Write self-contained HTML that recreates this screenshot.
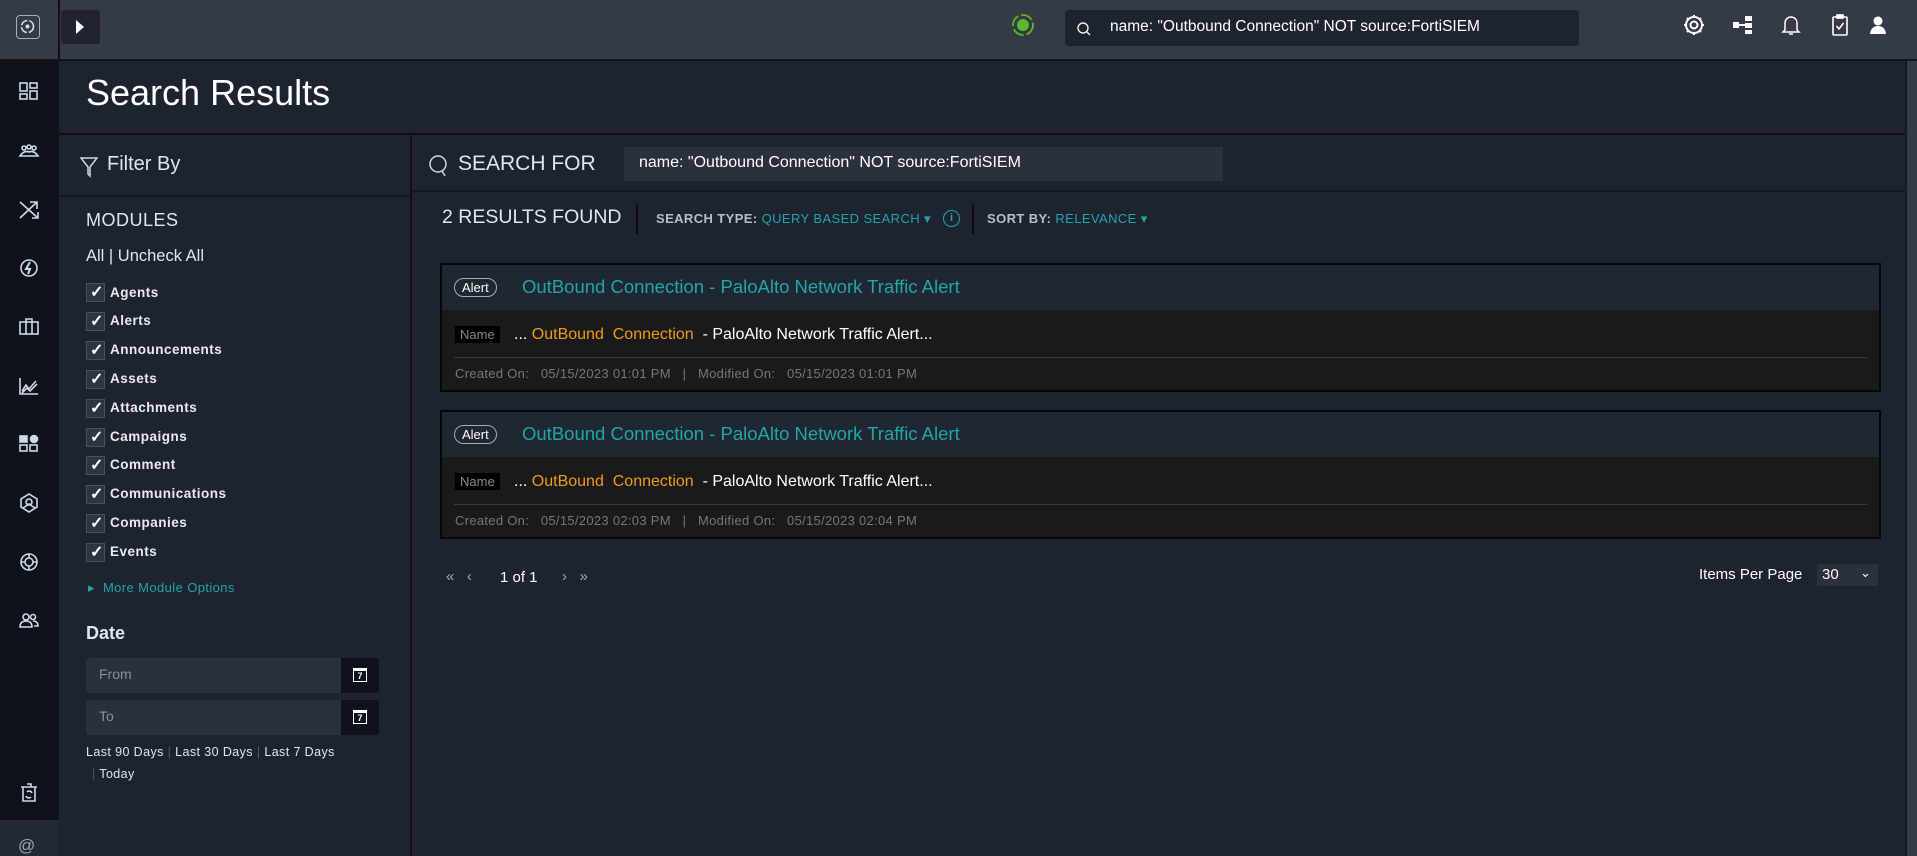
<!DOCTYPE html>
<html><head><meta charset="utf-8"><style>
*{box-sizing:border-box;margin:0;padding:0}
body{width:1917px;height:856px;overflow:hidden;background:#1e2330;font-family:"Liberation Sans",sans-serif;color:#e6e9ee;position:relative}
.abs{position:absolute}
svg{display:block}
.ic{position:absolute;left:17px;width:24px;height:24px}
.ic svg{stroke:#cfd8ea;fill:none;stroke-width:1.6}
.cb{position:absolute;left:86px;width:19px;height:19px;background:#2e3440;border:1px solid #4a505c}
.cb:after{content:"✓";position:absolute;left:3px;top:-2px;font-size:16px;font-weight:bold;color:#fff}
.cbl{position:absolute;left:110px;font-size:13.5px;font-weight:bold;letter-spacing:.5px;color:#e8ecf2}
.card{position:absolute;left:440px;width:1441px;height:129px;border:2px solid #050608;background:#1a1a1a}
.card .hd{height:45px;background:#1f2733;position:relative}
.pill{position:absolute;left:12px;top:13px;border:1px solid #aab;border-radius:11px;font-size:13px;padding:1px 7px;color:#fff}
.ttl{position:absolute;left:80px;top:11px;font-size:18.5px;color:#22a5aa}
.nm{position:absolute;left:13px;top:60px;background:#000;color:#888;font-size:13px;padding:1px 5px}
.line{position:absolute;left:12px;top:90px;font-size:16px;color:#fff}
.or{color:#f09b1c}
.sep{position:absolute;left:12px;right:12px;top:92px;height:1px;background:#3a3a3a}
.dt{position:absolute;left:13px;top:101px;font-size:13px;color:#777;letter-spacing:.3px}
</style></head><body>
<div class="abs" style="left:0;top:0;width:1917px;height:59px;background:#343a47"></div>
<div class="abs" style="left:58px;top:0;width:2px;height:59px;background:#0e1118"></div>
<div class="abs" style="left:0;top:59px;width:1917px;height:2px;background:#10141b"></div>
<div class="abs" style="left:16px;top:15px;width:24px;height:24px;border:1.5px solid #a8afbb;border-radius:4px">
<svg width="21" height="21" viewBox="0 0 21 21"><circle cx="10.5" cy="10.5" r="6" stroke="#d8dde6" stroke-width="1.6" fill="none" stroke-dasharray="8 2"/><circle cx="10.5" cy="10.5" r="2" fill="#d8dde6"/></svg></div>
<div class="abs" style="left:61px;top:10px;width:39px;height:34px;background:#1f2430;border-radius:3px"><svg width="39" height="34"><path d="M15 10 L23 17 L15 24Z" fill="#fff"/></svg></div>
<svg class="abs" style="left:1011px;top:13px" width="24" height="24"><circle cx="12" cy="12" r="10" stroke="#5ab82c" stroke-width="1.8" fill="none" stroke-dasharray="12 3"/><circle cx="12" cy="12" r="6" fill="#5ab82c"/></svg>
<div class="abs" style="left:1065px;top:10px;width:514px;height:36px;background:#1e2330;border-radius:3px">
<svg class="abs" style="left:11px;top:11px" width="16" height="16"><circle cx="7" cy="7" r="5" stroke="#eee" stroke-width="1.4" fill="none"/><path d="M10.5 10.5L14 14" stroke="#eee" stroke-width="1.4"/></svg>
<div class="abs" style="left:45px;top:8px;font-size:15.5px;color:#fff">name: "Outbound Connection" NOT source:FortiSIEM</div></div>
<svg class="abs" style="left:1682px;top:13px" width="24" height="24" fill="none" stroke="#fff" stroke-width="2"><circle cx="12" cy="12" r="3.5"/><circle cx="12" cy="12" r="8"/><path d="M12 2V5 M12 19V22 M2 12H5 M19 12H22 M5 5L7 7 M17 17L19 19 M5 19L7 17 M17 7L19 5"/></svg>
<svg class="abs" style="left:1732px;top:15px" width="22" height="20" fill="#fff"><rect x="1" y="7" width="6" height="6"/><rect x="13" y="1" width="7" height="5"/><rect x="13" y="8" width="7" height="5"/><rect x="13" y="15" width="7" height="4"/><rect x="7" y="9" width="6" height="2"/></svg>
<svg class="abs" style="left:1781px;top:13px" width="20" height="24" fill="none" stroke="#fff" stroke-width="1.5"><path d="M4 17 V10 A6 6 0 0 1 16 10 V17 L18 19 H2Z"/><path d="M8 21 H12"/></svg>
<svg class="abs" style="left:1831px;top:13px" width="18" height="24" fill="none" stroke="#fff" stroke-width="1.6"><rect x="2" y="4" width="14" height="18" rx="1"/><rect x="6" y="2" width="6" height="3" fill="#fff"/><path d="M5.5 13 L8 16 L12.5 10"/></svg>
<svg class="abs" style="left:1868px;top:15px" width="20" height="20" fill="#fff"><circle cx="10" cy="6" r="4.5"/><path d="M2 19 Q3 11 10 11 Q17 11 18 19Z"/></svg>

<div class="abs" style="left:0;top:61px;width:59px;height:795px;background:#0e121a"></div>
<div class="abs" style="left:0;top:820px;width:59px;height:36px;background:#232934"></div>
<div class="abs" style="left:18px;top:836px;font-size:17px;color:#9aa">@</div>
<div class="ic" style="top:80px"><svg width="24" height="24"><rect x="3" y="3" width="7" height="8"/><rect x="13" y="3" width="7" height="5"/><rect x="3" y="14" width="7" height="5"/><rect x="13" y="11" width="7" height="8"/></svg></div>
<div class="ic" style="top:139px"><svg width="24" height="24"><circle cx="7" cy="9" r="2"/><circle cx="12" cy="8" r="2"/><circle cx="17" cy="9" r="2"/><path d="M3 17 Q7 11 12 13 Q17 11 21 17 Z"/></svg></div>
<div class="ic" style="top:198px"><svg width="24" height="24"><path d="M3 4 L21 20 M13 4 H20 V11 M20 4 L3 20 M21 14 V20 H15"/></svg></div>
<div class="ic" style="top:256px"><svg width="24" height="24"><circle cx="12" cy="12" r="8"/><path d="M13 6 L9 13 H13 L11 18" stroke-width="2"/></svg></div>
<div class="ic" style="top:315px"><svg width="24" height="24"><rect x="3" y="7" width="18" height="12"/><path d="M9 7 V4 H15 V7 M9 7V19 M15 7V19"/></svg></div>
<div class="ic" style="top:374px"><svg width="24" height="24"><path d="M3 4 V20 H21 M5 17 L9 11 L12 15 L19 7 M5 19 L10 14 L13 17 L20 10"/></svg></div>
<div class="ic" style="top:432px"><svg width="24" height="24"><rect x="3" y="4" width="7" height="6" fill="#cfd8ea"/><circle cx="17" cy="7" r="3.5" fill="#cfd8ea"/><rect x="3" y="13" width="7" height="6"/><rect x="13" y="13" width="7" height="6"/></svg></div>
<div class="ic" style="top:491px"><svg width="24" height="24"><path d="M12 3 L20 8 V16 L12 21 L4 16 V8Z"/><circle cx="12" cy="11" r="3"/><path d="M6 17 L12 13 L18 17"/></svg></div>
<div class="ic" style="top:550px"><svg width="24" height="24"><circle cx="12" cy="12" r="8"/><circle cx="12" cy="12" r="4"/><path d="M12 4V8 M12 16V20 M4 12H8 M16 12H20"/></svg></div>
<div class="ic" style="top:608px"><svg width="24" height="24"><circle cx="9" cy="9" r="3"/><circle cx="16" cy="9" r="2.5"/><path d="M3 19 Q3 13 9 13 Q15 13 15 19Z M16 13 Q21 13 21 18 H17"/></svg></div>
<div class="ic" style="top:780px"><svg width="24" height="24"><path d="M6 7 H18 V21 H6Z M4 7 H20 M10 4 H14 V7"/><path d="M10 12 A3 3 0 0 1 15 13 M14 17 A3 3 0 0 1 9 16"/></svg></div>

<div class="abs" style="left:86px;top:72px;font-size:36px;color:#fff">Search Results</div>
<div class="abs" style="left:59px;top:133px;width:1858px;height:2px;background:#0e1118"></div>
<div class="abs" style="left:1907px;top:61px;width:10px;height:795px;background:#343a47"></div>
<div class="abs" style="left:1905px;top:61px;width:2px;height:795px;background:#151922"></div>

<div class="abs" style="left:410px;top:135px;width:2px;height:721px;background:#0e1118"></div>
<div class="abs" style="left:59px;top:195px;width:351px;height:2px;background:#141821"></div>
<svg class="abs" style="left:80px;top:156px" width="18" height="22" fill="none" stroke="#cfd8ea" stroke-width="1.5"><path d="M1 2 H17 L10 11 V20 L8 18 V11Z"/></svg>
<div class="abs" style="left:107px;top:153px;font-size:20px;color:#dfe6f0">Filter By</div>
<div class="abs" style="left:86px;top:210px;font-size:18px;color:#dfe6f0;letter-spacing:.5px">MODULES</div>
<div class="abs" style="left:86px;top:247px;font-size:16.5px;color:#dfe6f0">All | Uncheck All</div>
<div class="cb" style="top:283px"></div><div class="cbl" style="top:285px">Agents</div>
<div class="cb" style="top:312px"></div><div class="cbl" style="top:313px">Alerts</div>
<div class="cb" style="top:341px"></div><div class="cbl" style="top:342px">Announcements</div>
<div class="cb" style="top:370px"></div><div class="cbl" style="top:371px">Assets</div>
<div class="cb" style="top:399px"></div><div class="cbl" style="top:400px">Attachments</div>
<div class="cb" style="top:428px"></div><div class="cbl" style="top:429px">Campaigns</div>
<div class="cb" style="top:456px"></div><div class="cbl" style="top:457px">Comment</div>
<div class="cb" style="top:485px"></div><div class="cbl" style="top:486px">Communications</div>
<div class="cb" style="top:514px"></div><div class="cbl" style="top:515px">Companies</div>
<div class="cb" style="top:543px"></div><div class="cbl" style="top:544px">Events</div>
<div class="abs" style="left:88px;top:580px;font-size:13px;color:#22a5aa;letter-spacing:.4px">▸&nbsp; More Module Options</div>
<div class="abs" style="left:86px;top:623px;font-size:18px;font-weight:bold;color:#dfe6f0">Date</div>
<div class="abs" style="left:86px;top:658px;width:293px;height:35px;background:#2a303c;border-radius:3px"><span class="abs" style="left:13px;top:8px;font-size:14px;color:#8a909a">From</span><div class="abs" style="left:255px;top:0;width:38px;height:35px;background:#0e121a;border-radius:0 3px 3px 0"></div></div>
<div class="abs" style="left:86px;top:700px;width:293px;height:35px;background:#2a303c;border-radius:3px"><span class="abs" style="left:13px;top:8px;font-size:14px;color:#8a909a">To</span><div class="abs" style="left:255px;top:0;width:38px;height:35px;background:#0e121a;border-radius:0 3px 3px 0"></div></div>
<div class="abs" style="left:353px;top:668px;width:14px;height:14px;border:1.5px solid #fff;border-top-width:3px;font-size:9px;font-weight:bold;text-align:center;line-height:10px;color:#fff">7</div>
<div class="abs" style="left:353px;top:710px;width:14px;height:14px;border:1.5px solid #fff;border-top-width:3px;font-size:9px;font-weight:bold;text-align:center;line-height:10px;color:#fff">7</div>
<div class="abs" style="left:86px;top:745px;font-size:12.5px;color:#dfe6f0;letter-spacing:.4px">Last 90 Days <span style="color:#555">|</span> Last 30 Days <span style="color:#555">|</span> Last 7 Days</div>
<div class="abs" style="left:92px;top:767px;font-size:12.5px;color:#dfe6f0;letter-spacing:.4px"><span style="color:#555">|</span> Today</div>

<div class="abs" style="left:412px;top:190px;width:1493px;height:2px;background:#141821"></div>
<svg class="abs" style="left:428px;top:154px" width="22" height="24" fill="none" stroke="#cfd8ea" stroke-width="1.5"><circle cx="10" cy="10" r="8"/><path d="M14 17 L17 22"/></svg>
<div class="abs" style="left:458px;top:152px;font-size:21px;color:#dfe6f0">SEARCH FOR</div>
<div class="abs" style="left:624px;top:147px;width:599px;height:34px;background:#2a303c;border-radius:2px"><span class="abs" style="left:15px;top:7px;font-size:16px;color:#fff">name: "Outbound Connection" NOT source:FortiSIEM</span></div>
<div class="abs" style="left:442px;top:206px;font-size:19.5px;color:#dfe6f0">2 RESULTS FOUND</div>
<div class="abs" style="left:636px;top:204px;width:2px;height:30px;background:#0a0c10"></div>
<div class="abs" style="left:656px;top:211px;font-size:13px;color:#b8bfca;font-weight:bold;letter-spacing:.4px">SEARCH TYPE: <span style="color:#22a5aa;font-weight:normal">QUERY BASED SEARCH ▾</span></div>
<div class="abs" style="left:943px;top:210px;width:17px;height:17px;border:1.5px solid #22a5aa;border-radius:50%;font-size:11px;color:#22a5aa;text-align:center;line-height:14px;font-weight:bold">i</div>
<div class="abs" style="left:972px;top:204px;width:2px;height:30px;background:#0a0c10"></div>
<div class="abs" style="left:987px;top:211px;font-size:13px;color:#b8bfca;font-weight:bold;letter-spacing:.4px">SORT BY: <span style="color:#22a5aa;font-weight:normal">RELEVANCE ▾</span></div>

<div class="card" style="top:263px"><div class="hd"><span class="pill">Alert</span><span class="ttl">OutBound Connection - PaloAlto Network Traffic Alert</span></div>
<span class="nm" style="top:61px">Name</span><div class="line" style="top:61px;left:72px">... <span class="or">OutBound</span>&nbsp; <span class="or">Connection</span>&nbsp; - PaloAlto Network Traffic Alert...</div>
<div class="sep"></div><div class="dt">Created On: &nbsp;&nbsp;05/15/2023 01:01 PM &nbsp;&nbsp;| &nbsp;&nbsp;Modified On: &nbsp;&nbsp;05/15/2023 01:01 PM</div></div>

<div class="card" style="top:410px"><div class="hd"><span class="pill">Alert</span><span class="ttl">OutBound Connection - PaloAlto Network Traffic Alert</span></div>
<span class="nm" style="top:61px">Name</span><div class="line" style="top:61px;left:72px">... <span class="or">OutBound</span>&nbsp; <span class="or">Connection</span>&nbsp; - PaloAlto Network Traffic Alert...</div>
<div class="sep"></div><div class="dt">Created On: &nbsp;&nbsp;05/15/2023 02:03 PM &nbsp;&nbsp;| &nbsp;&nbsp;Modified On: &nbsp;&nbsp;05/15/2023 02:04 PM</div></div>

<div class="abs" style="left:446px;top:568px;font-size:15px;color:#aab">«&nbsp;&nbsp; ‹</div>
<div class="abs" style="left:500px;top:569px;font-size:15px;color:#fff">1 of 1</div>
<div class="abs" style="left:562px;top:568px;font-size:15px;color:#aab">›&nbsp;&nbsp; »</div>
<div class="abs" style="left:1699px;top:566px;font-size:15px;color:#fff">Items Per Page</div>
<div class="abs" style="left:1817px;top:564px;width:61px;height:22px;background:#2a303c"><span class="abs" style="left:5px;top:2px;font-size:15px;color:#fff">30</span><span class="abs" style="left:43px;top:1px;font-size:13px;color:#fff">⌄</span></div>
</body></html>
